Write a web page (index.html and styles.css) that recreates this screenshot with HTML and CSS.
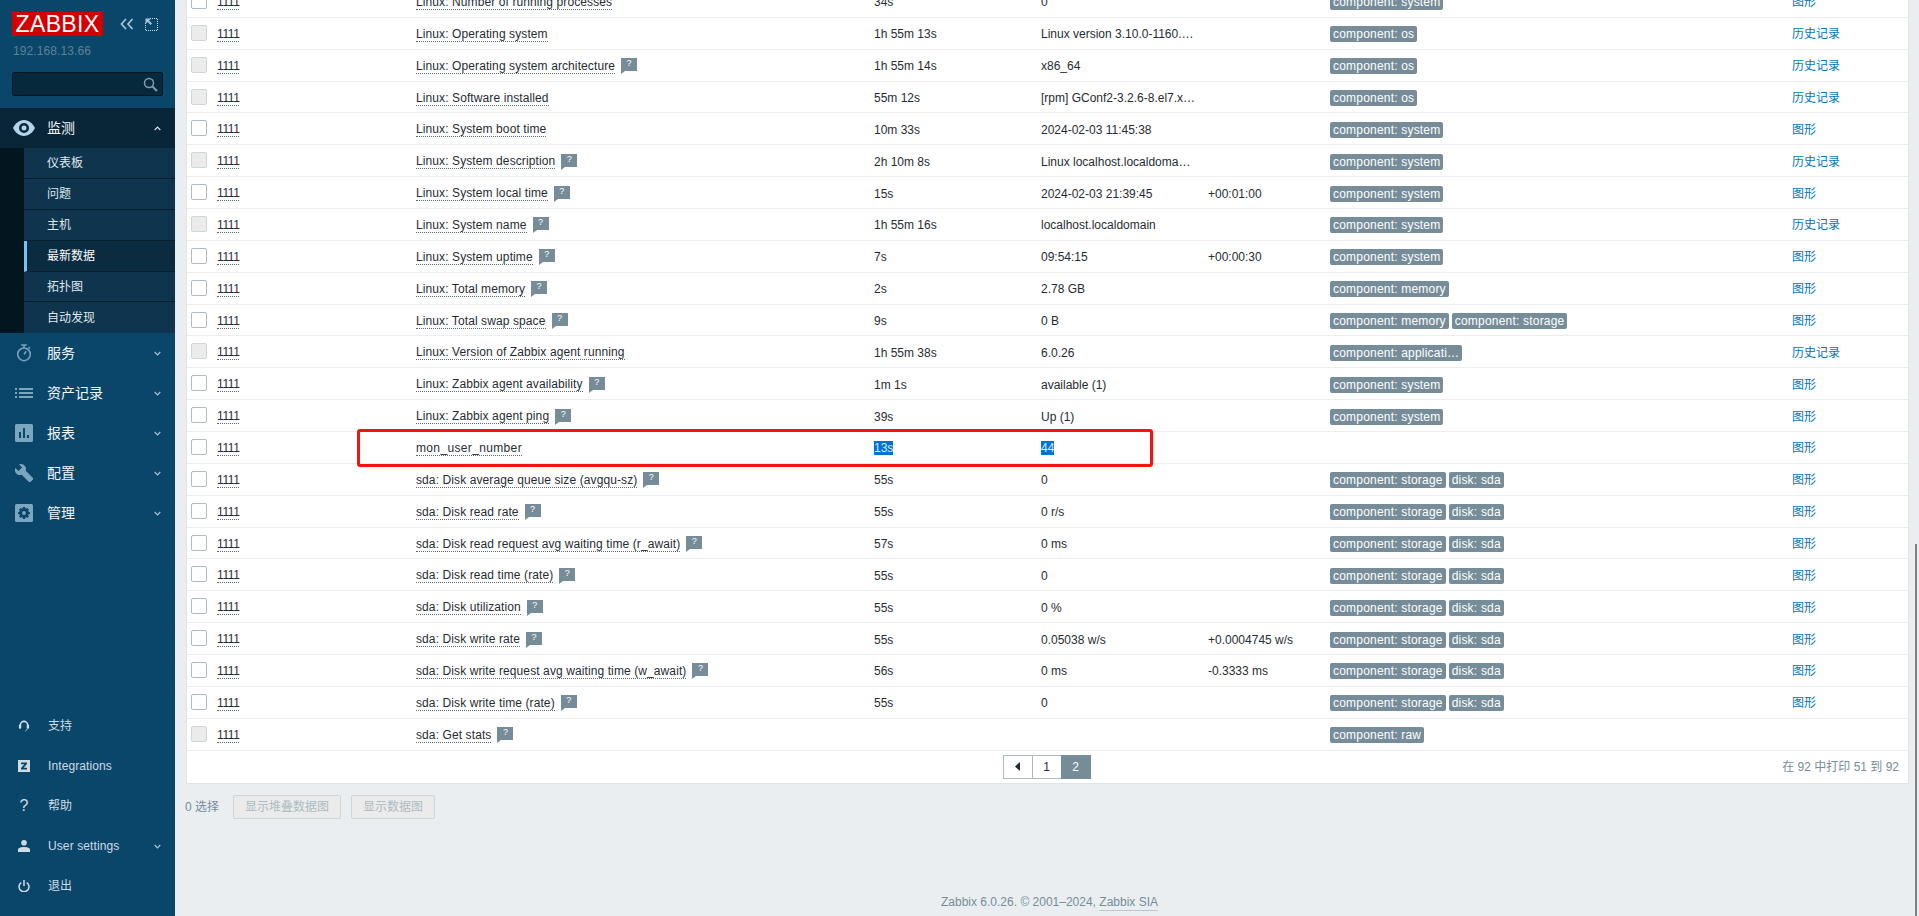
FILE: index.html
```html
<!DOCTYPE html>
<html lang="zh">
<head>
<meta charset="utf-8">
<title>最新数据</title>
<link rel="stylesheet" href="styles.css">
</head>
<body>
<aside class="sidebar">
  <div class="brand">
    <div class="logo">ZABBIX</div>
    <svg class="ctl" width="14" height="12" viewBox="0 0 14 12"><path d="M6 1 1.500 6 6 11M12.500 1 8 6l4.500 5" fill="none" stroke="#a9c6d8" stroke-width="1.700"/></svg>
    <svg class="ctl ctl-b" width="13" height="13" viewBox="0 0 13 13"><path d="M5 .5h7.500V12.500H.5V5" fill="none" stroke="#cfdfe9" stroke-dasharray="1 1"/><path d="M.5.5h5.500L4 2.600l3 3-1.400 1.400-3-3L.5 6z" fill="#a9c6d8"/></svg>
  </div>
  <div class="server">192.168.13.66</div>
  <div class="search">
    <svg width="15" height="15" viewBox="0 0 15 15"><circle cx="6" cy="6" r="4.500" fill="none" stroke="#7f9fb1" stroke-width="1.500"/><path d="m9.500 9.500 4.500 4.500" stroke="#7f9fb1" stroke-width="2"/></svg>
  </div>
  <nav class="menu">
    <div class="sec sec-open">
      <div class="item item-open">
        <svg class="ico" viewBox="0 0 22 16"><path fill-rule="evenodd" d="M11 0c5 0 9 3.800 11 8-2 4.200-6 8-11 8S2 12.200 0 8c2-4.200 6-8 11-8zm0 3a5 5 0 1 0 0 10 5 5 0 0 0 0-10zm0 2.500a2.500 2.500 0 1 1 0 5 2.500 2.500 0 0 1 0-5z" fill="#b5d3e8"/></svg>
        <span class="lbl">监测</span>
        <svg class="chev" width="7" height="5" viewBox="0 0 7 5"><path d="M.7 4 3.500 1.200 6.300 4" fill="none" stroke="#dbe6ec" stroke-width="1.200"/></svg>
      </div>
      <div class="subwrap">
        <a class="sub">仪表板</a>
        <a class="sub">问题</a>
        <a class="sub">主机</a>
        <a class="sub sub-on">最新数据</a>
        <a class="sub">拓扑图</a>
        <a class="sub sub-last">自动发现</a>
      </div>
    </div>
    <div class="item">
      <svg class="ico" viewBox="0 0 18 20"><g fill="none" stroke="#7ba6c0" stroke-width="1.700"><circle cx="9" cy="11.500" r="7"/><path d="M6 1h6M9 1v3M14 3.500l1.500 1.500"/><path d="M9 11.500 11.500 8"/></g></svg>
      <span class="lbl">服务</span>
      <svg class="chev" width="7" height="5" viewBox="0 0 7 5"><path d="M.7 1 3.500 3.800 6.300 1" fill="none" stroke="#a9c6d8" stroke-width="1.200"/></svg>
    </div>
    <div class="item">
      <svg class="ico" viewBox="0 0 18 12"><path d="M0 1h2v2H0zM0 5h2v2H0zM0 9h2v2H0zM4 1h14v2H4zM4 5h14v2H4zM4 9h14v2H4z" fill="#7ba6c0"/></svg>
      <span class="lbl">资产记录</span>
      <svg class="chev" width="7" height="5" viewBox="0 0 7 5"><path d="M.7 1 3.500 3.800 6.300 1" fill="none" stroke="#a9c6d8" stroke-width="1.200"/></svg>
    </div>
    <div class="item">
      <svg class="ico" viewBox="0 0 18 18"><path fill-rule="evenodd" d="M1.500 0h15A1.500 1.500 0 0 1 18 1.500v15a1.500 1.500 0 0 1-1.500 1.500h-15A1.500 1.500 0 0 1 0 16.500v-15A1.500 1.500 0 0 1 1.500 0zM4 8v6h2V8zm4-4v10h2V4zm4 7v3h2v-3z" fill="#7ba6c0"/></svg>
      <span class="lbl">报表</span>
      <svg class="chev" width="7" height="5" viewBox="0 0 7 5"><path d="M.7 1 3.500 3.800 6.300 1" fill="none" stroke="#a9c6d8" stroke-width="1.200"/></svg>
    </div>
    <div class="item">
      <svg class="ico" viewBox="0 0 18 18"><path d="M6 0a5 5 0 0 1 4.700 6.700l7 7a1.500 1.500 0 0 1 0 2.100l-1.900 1.900a1.500 1.500 0 0 1-2.100 0l-7-7A5 5 0 0 1 .3 4L3.500 7 7 3.500 4 .3A5 5 0 0 1 6 0z" fill="#7ba6c0"/></svg>
      <span class="lbl">配置</span>
      <svg class="chev" width="7" height="5" viewBox="0 0 7 5"><path d="M.7 1 3.500 3.800 6.300 1" fill="none" stroke="#a9c6d8" stroke-width="1.200"/></svg>
    </div>
    <div class="item">
      <svg class="ico" viewBox="0 0 18 18"><rect width="18" height="18" rx="1.500" fill="#7ba6c0"/><circle cx="9" cy="9" r="3.600" fill="none" stroke="#0a466a" stroke-width="2.600"/><path d="M9 3v12M3 9h12M4.800 4.800l8.400 8.400M13.200 4.800l-8.400 8.400" stroke="#0a466a" stroke-width="2.200"/><circle cx="9" cy="9" r="1.900" fill="#7ba6c0"/></svg>
      <span class="lbl">管理</span>
      <svg class="chev" width="7" height="5" viewBox="0 0 7 5"><path d="M.7 1 3.500 3.800 6.300 1" fill="none" stroke="#a9c6d8" stroke-width="1.200"/></svg>
    </div>
  </nav>
  <nav class="user">
    <div class="uitem">
      <svg class="uico" viewBox="0 0 12 13"><path d="M2 8V5.500a4 4 0 0 1 8 0V8" fill="none" stroke="#cfdce4" stroke-width="1.700"/><rect x=".5" y="5" width="2.500" height="4.500" rx="1" fill="#cfdce4"/><rect x="9" y="5" width="2.500" height="4.500" rx="1" fill="#cfdce4"/><path d="M10 9.500 7.500 12" stroke="#cfdce4"/></svg>
      <span>支持</span>
    </div>
    <div class="uitem">
      <svg class="uico" viewBox="0 0 12 12"><path fill-rule="evenodd" d="M0 0h12v12H0zm3 2.500v1.700h3.300L3 8v1.500h6V7.800H5.600L9 4V2.500z" fill="#cfdce4"/></svg>
      <span>Integrations</span>
    </div>
    <div class="uitem">
      <span class="qmark">?</span>
      <span>帮助</span>
    </div>
    <div class="uitem">
      <svg class="uico" viewBox="0 0 12 12"><circle cx="6" cy="2.800" r="2.800" fill="#cfdce4"/><path d="M0 12V9.800C0 7.800 3 7 6 7s6 .8 6 2.800V12z" fill="#cfdce4"/></svg>
      <span>User settings</span>
      <svg class="chev" width="7" height="5" viewBox="0 0 7 5"><path d="M.7 1 3.500 3.800 6.300 1" fill="none" stroke="#a9c6d8" stroke-width="1.200"/></svg>
    </div>
    <div class="uitem">
      <svg class="uico" viewBox="0 0 12 12"><path d="M3.200 2.600a5 5 0 1 0 5.600 0M6 0v6" fill="none" stroke="#cfdce4" stroke-width="1.500"/></svg>
      <span>退出</span>
    </div>
  </nav>
</aside>

<main class="main">
  <section class="panel">
    <div class="row"><span class="cb"></span><a class="host">1111</a><span class="name"><a class="nm">Linux: Number of running processes</a></span><span>34s</span><span>0</span><span></span><span class="tags"><b class="tag">component: system</b></span><a class="lnk">图形</a></div>
    <div class="row"><span class="cb cb-off"></span><a class="host">1111</a><span class="name"><a class="nm">Linux: Operating system</a></span><span>1h 55m 13s</span><span>Linux version 3.10.0-1160.…</span><span></span><span class="tags"><b class="tag">component: os</b></span><a class="lnk">历史记录</a></div>
    <div class="row"><span class="cb cb-off"></span><a class="host">1111</a><span class="name"><a class="nm">Linux: Operating system architecture</a><i class="help">?</i></span><span>1h 55m 14s</span><span>x86_64</span><span></span><span class="tags"><b class="tag">component: os</b></span><a class="lnk">历史记录</a></div>
    <div class="row"><span class="cb cb-off"></span><a class="host">1111</a><span class="name"><a class="nm">Linux: Software installed</a></span><span>55m 12s</span><span>[rpm] GConf2-3.2.6-8.el7.x…</span><span></span><span class="tags"><b class="tag">component: os</b></span><a class="lnk">历史记录</a></div>
    <div class="row"><span class="cb"></span><a class="host">1111</a><span class="name"><a class="nm">Linux: System boot time</a></span><span>10m 33s</span><span>2024-02-03 11:45:38</span><span></span><span class="tags"><b class="tag">component: system</b></span><a class="lnk">图形</a></div>
    <div class="row"><span class="cb cb-off"></span><a class="host">1111</a><span class="name"><a class="nm">Linux: System description</a><i class="help">?</i></span><span>2h 10m 8s</span><span>Linux localhost.localdoma…</span><span></span><span class="tags"><b class="tag">component: system</b></span><a class="lnk">历史记录</a></div>
    <div class="row"><span class="cb"></span><a class="host">1111</a><span class="name"><a class="nm">Linux: System local time</a><i class="help">?</i></span><span>15s</span><span>2024-02-03 21:39:45</span><span>+00:01:00</span><span class="tags"><b class="tag">component: system</b></span><a class="lnk">图形</a></div>
    <div class="row"><span class="cb cb-off"></span><a class="host">1111</a><span class="name"><a class="nm">Linux: System name</a><i class="help">?</i></span><span>1h 55m 16s</span><span>localhost.localdomain</span><span></span><span class="tags"><b class="tag">component: system</b></span><a class="lnk">历史记录</a></div>
    <div class="row"><span class="cb"></span><a class="host">1111</a><span class="name"><a class="nm">Linux: System uptime</a><i class="help">?</i></span><span>7s</span><span>09:54:15</span><span>+00:00:30</span><span class="tags"><b class="tag">component: system</b></span><a class="lnk">图形</a></div>
    <div class="row"><span class="cb"></span><a class="host">1111</a><span class="name"><a class="nm">Linux: Total memory</a><i class="help">?</i></span><span>2s</span><span>2.78 GB</span><span></span><span class="tags"><b class="tag">component: memory</b></span><a class="lnk">图形</a></div>
    <div class="row"><span class="cb"></span><a class="host">1111</a><span class="name"><a class="nm">Linux: Total swap space</a><i class="help">?</i></span><span>9s</span><span>0 B</span><span></span><span class="tags"><b class="tag">component: memory</b><b class="tag">component: storage</b></span><a class="lnk">图形</a></div>
    <div class="row"><span class="cb cb-off"></span><a class="host">1111</a><span class="name"><a class="nm">Linux: Version of Zabbix agent running</a></span><span>1h 55m 38s</span><span>6.0.26</span><span></span><span class="tags"><b class="tag">component: applicati…</b></span><a class="lnk">历史记录</a></div>
    <div class="row"><span class="cb"></span><a class="host">1111</a><span class="name"><a class="nm">Linux: Zabbix agent availability</a><i class="help">?</i></span><span>1m 1s</span><span>available (1)</span><span></span><span class="tags"><b class="tag">component: system</b></span><a class="lnk">图形</a></div>
    <div class="row"><span class="cb"></span><a class="host">1111</a><span class="name"><a class="nm">Linux: Zabbix agent ping</a><i class="help">?</i></span><span>39s</span><span>Up (1)</span><span></span><span class="tags"><b class="tag">component: system</b></span><a class="lnk">图形</a></div>
    <div class="row row-mark"><span class="cb"></span><a class="host">1111</a><span class="name"><a class="nm nm-wide">mon_user_number</a></span><span><em class="sel">13s</em></span><span><em class="sel">44</em></span><span></span><span class="tags"></span><a class="lnk">图形</a><div class="redbox"></div></div>
    <div class="row"><span class="cb"></span><a class="host">1111</a><span class="name"><a class="nm">sda: Disk average queue size (avgqu-sz)</a><i class="help">?</i></span><span>55s</span><span>0</span><span></span><span class="tags"><b class="tag">component: storage</b><b class="tag">disk: sda</b></span><a class="lnk">图形</a></div>
    <div class="row"><span class="cb"></span><a class="host">1111</a><span class="name"><a class="nm">sda: Disk read rate</a><i class="help">?</i></span><span>55s</span><span>0 r/s</span><span></span><span class="tags"><b class="tag">component: storage</b><b class="tag">disk: sda</b></span><a class="lnk">图形</a></div>
    <div class="row"><span class="cb"></span><a class="host">1111</a><span class="name"><a class="nm">sda: Disk read request avg waiting time (r_await)</a><i class="help">?</i></span><span>57s</span><span>0 ms</span><span></span><span class="tags"><b class="tag">component: storage</b><b class="tag">disk: sda</b></span><a class="lnk">图形</a></div>
    <div class="row"><span class="cb"></span><a class="host">1111</a><span class="name"><a class="nm">sda: Disk read time (rate)</a><i class="help">?</i></span><span>55s</span><span>0</span><span></span><span class="tags"><b class="tag">component: storage</b><b class="tag">disk: sda</b></span><a class="lnk">图形</a></div>
    <div class="row"><span class="cb"></span><a class="host">1111</a><span class="name"><a class="nm">sda: Disk utilization</a><i class="help">?</i></span><span>55s</span><span>0 %</span><span></span><span class="tags"><b class="tag">component: storage</b><b class="tag">disk: sda</b></span><a class="lnk">图形</a></div>
    <div class="row"><span class="cb"></span><a class="host">1111</a><span class="name"><a class="nm">sda: Disk write rate</a><i class="help">?</i></span><span>55s</span><span>0.05038 w/s</span><span>+0.0004745 w/s</span><span class="tags"><b class="tag">component: storage</b><b class="tag">disk: sda</b></span><a class="lnk">图形</a></div>
    <div class="row"><span class="cb"></span><a class="host">1111</a><span class="name"><a class="nm">sda: Disk write request avg waiting time (w_await)</a><i class="help">?</i></span><span>56s</span><span>0 ms</span><span>-0.3333 ms</span><span class="tags"><b class="tag">component: storage</b><b class="tag">disk: sda</b></span><a class="lnk">图形</a></div>
    <div class="row"><span class="cb"></span><a class="host">1111</a><span class="name"><a class="nm">sda: Disk write time (rate)</a><i class="help">?</i></span><span>55s</span><span>0</span><span></span><span class="tags"><b class="tag">component: storage</b><b class="tag">disk: sda</b></span><a class="lnk">图形</a></div>
    <div class="row"><span class="cb cb-off"></span><a class="host">1111</a><span class="name"><a class="nm">sda: Get stats</a><i class="help">?</i></span><span></span><span></span><span></span><span class="tags"><b class="tag">component: raw</b></span><span></span></div>
    <div class="pager">
      <div class="pages">
        <a class="pg"><svg width="5" height="9" viewBox="0 0 5 9"><path d="M5 0v9L0 4.500z" fill="#1f2c33"/></svg></a>
        <a class="pg">1</a>
        <a class="pg pg-on">2</a>
      </div>
      <span class="count">在 92 中打印 51 到 92</span>
    </div>
  </section>
  <div class="actions">
    <span class="selcount">0 选择</span>
    <button class="btn" disabled>显示堆叠数据图</button>
    <button class="btn" disabled>显示数据图</button>
  </div>
  <footer class="foot">Zabbix 6.0.26. © 2001–2024, <a class="foot-link">Zabbix SIA</a></footer>
  <div class="thumb"></div>
</main>
</body>
</html>
```
FILE: styles.css
```css
* { box-sizing: border-box; }
html, body { height: 100%; }
body {
  margin: 0;
  display: flex;
  overflow: hidden;
  background: #ebeef0;
  color: #1f2c33;
  font: 12px/14px "Liberation Sans", "Noto Sans CJK SC", sans-serif;
}
a { color: inherit; text-decoration: none; }
i, em, b { font-style: normal; font-weight: normal; }

.sidebar {
  width: 175px;
  flex: none;
  display: flex;
  flex-direction: column;
  background: #0a466a;
}
.brand { display: flex; align-items: center; padding: 12px 0 0 12px; }
.logo {
  width: 91px;
  height: 24px;
  background: #d40000;
  color: #fff;
  font-size: 23px;
  line-height: 24px;
  letter-spacing: .35px;
  text-align: center;
}
.ctl { margin-left: 17px; }
.ctl-b { margin-left: 11px; }
.server { margin: 7px 0 0 13px; color: #5f8197; line-height: 16px; letter-spacing: .1px; }
.search {
  margin: 13px 12px 0;
  height: 24px;
  display: flex;
  align-items: center;
  justify-content: flex-end;
  padding-right: 4px;
  background: #07293c;
  border: 1px solid #041720;
  border-radius: 2px;
}
.menu { margin-top: 12px; }
.item {
  height: 40px;
  display: flex;
  align-items: center;
  padding-left: 15px;
  color: #f2f6f8;
  font-size: 14px;
}
.sec-open { background: #03151f; }
.item-open { background: #092538; padding-left: 13px; }
.ico { width: 18px; height: 18px; flex: none; margin-right: 14px; }
.item-open .ico { width: 22px; margin-right: 12px; }
.lbl { flex: 1; }
.chev { margin-right: 14px; flex: none; }
.subwrap { padding-left: 24px; height: 185px; }
.sub {
  display: flex;
  align-items: center;
  height: 30.900px;
  padding-left: 23px;
  background: #0f344d;
  border-bottom: 1px solid #06202f;
  color: #dfe9ef;
}
.sub-on {
  background: #0a2b40;
  border-left: 3px solid #76c4f4;
  padding-left: 20px;
  color: #fff;
}
.sub-last { border-bottom: 0; }

.user { margin-top: auto; padding-bottom: 10px; }
.uitem {
  height: 40px;
  display: flex;
  align-items: center;
  padding-left: 18px;
  color: #cfdce4;
  letter-spacing: .1px;
}
.uitem > span:not(.qmark) { flex: 1; }
.uico { width: 12px; height: 12px; flex: none; margin-right: 18px; }
.qmark { width: 12px; margin-right: 18px; font-size: 16px; text-align: center; }

.main {
  position: relative;
  flex: 1;
  min-width: 0;
  display: flex;
  flex-direction: column;
  padding: 0 10px 0 11px;
}
.panel {
  margin-top: -14px;
  flex: none;
  background: #fff;
  border: solid #dfe4e7;
  border-width: 0 1px 1px;
}
.row {
  position: relative;
  display: grid;
  grid-template-columns: 30px 199px 458px 167px 167px 122px 462px 1fr;
  align-items: center;
  height: 31.870px;
  padding-top: 2px;
  border-bottom: 1px solid #ebeef0;
  white-space: nowrap;
}
.cb {
  justify-self: start;
  margin: 0 0 3px 4px;
  width: 16px;
  height: 16px;
  background: #fff;
  border: 1px solid #acbbc2;
  border-radius: 2px;
}
.cb-off { background: #ebebeb; border-color: #cfd6da; }
.host, .nm { border-bottom: 1px dotted #5a6a73; line-height: 13px; padding-top: 1px; }
.host { justify-self: start; letter-spacing: -.4px; }
.nm { letter-spacing: .1px; }
.nm-wide { letter-spacing: .35px; }
.name { display: flex; align-items: center; }
.help {
  position: relative;
  width: 16px;
  height: 13px;
  margin: -3px 0 0 6px;
  background: #768d99;
  color: #fff;
  font-size: 9px;
  line-height: 11px;
  text-align: center;
}
.help::after {
  content: "";
  position: absolute;
  left: 0;
  top: 13px;
  border-top: 3px solid #768d99;
  border-right: 4px solid transparent;
}
.sel { background: #0073d1; color: #dce9f3; }
.tags { display: flex; gap: 3px; }
.tag {
  height: 16px;
  padding: 0 3px;
  background: #768d99;
  color: #fff;
  border-radius: 2px;
  line-height: 16px;
  letter-spacing: .2px;
}
.lnk { color: #0275b8; justify-self: start; }
.redbox {
  position: absolute;
  left: 170px;
  top: -3px;
  width: 796px;
  height: 38px;
  border: 3px solid #f5120f;
  border-radius: 3px;
}
.pager {
  height: 32px;
  display: flex;
  align-items: center;
  justify-content: center;
  position: relative;
}
.pages { display: flex; margin-left: -1px; }
.pg {
  width: 30px;
  height: 24px;
  display: flex;
  align-items: center;
  justify-content: center;
  background: #fff;
  border: 1px solid #acbbc2;
  margin-left: -1px;
}
.pg-on { background: #768d99; border-color: #768d99; color: #fff; }
.count { position: absolute; right: 9px; color: #768d99; }
.actions { display: flex; align-items: center; gap: 10px; margin: 11px 0 0 -1px; color: #768d99; }
.selcount { margin-right: 4px; }
.btn {
  height: 24px;
  padding: 0 11px;
  background: #ebebeb;
  border: 1px solid #cfd6da;
  border-radius: 2px;
  color: #acbbc2;
  font: inherit;
}
.foot {
  margin-top: auto;
  padding: 0 0 7px 4px;
  text-align: center;
  color: #768d99;
  line-height: 14px;
}
.foot-link { border-bottom: 1px solid #bcc8ce; padding-bottom: 1px; }
.thumb {
  position: absolute;
  right: 2px;
  top: 544px;
  bottom: 0;
  width: 2px;
  background: #808080;
}
```
